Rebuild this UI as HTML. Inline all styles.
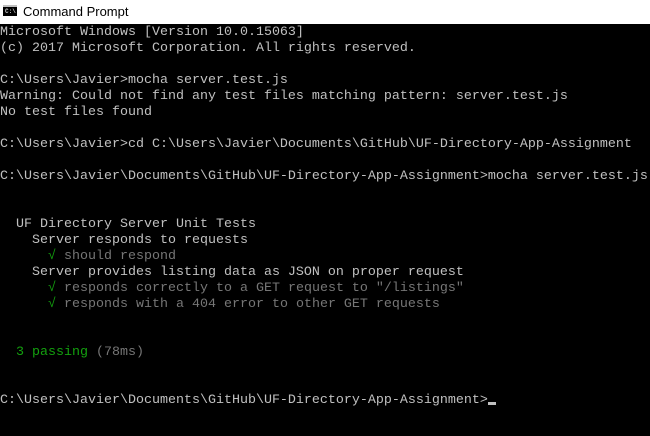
<!DOCTYPE html>
<html><head><meta charset="utf-8"><style>
html,body{margin:0;padding:0;width:650px;height:436px;overflow:hidden;background:#000}
#t{position:absolute;left:0;top:0;width:650px;height:24px;background:#fff}
#t span{position:absolute;left:23px;top:4px;font:13px "Liberation Sans",sans-serif;color:#000}
#ic{position:absolute;left:3px;top:5px;width:14px;height:11px;background:#000;border-top:2px solid #c0c0c0;box-sizing:border-box}
#ic i{position:absolute;left:2px;top:2px;font:bold 6px "Liberation Mono",monospace;color:#ccc;font-style:normal;line-height:6px}
pre{position:absolute;left:0;top:25px;margin:0;font:13.33px/16px "Liberation Mono",monospace;color:#c0c0c0;white-space:pre}
.g{color:#13a10e}.d{color:#767676}
.cur{display:inline-block;width:8px;height:3px;background:#c0c0c0;vertical-align:-2px}
</style></head><body>
<div id="t"><div id="ic"><i>C:\</i></div><span>Command Prompt</span></div>
<pre>Microsoft Windows [Version 10.0.15063]
(c) 2017 Microsoft Corporation. All rights reserved.

C:\Users\Javier&gt;mocha server.test.js
Warning: Could not find any test files matching pattern: server.test.js
No test files found

C:\Users\Javier&gt;cd C:\Users\Javier\Documents\GitHub\UF-Directory-App-Assignment

C:\Users\Javier\Documents\GitHub\UF-Directory-App-Assignment&gt;mocha server.test.js


  UF Directory Server Unit Tests
    Server responds to requests
      <span class="g">√</span> <span class="d">should respond</span>
    Server provides listing data as JSON on proper request
      <span class="g">√</span> <span class="d">responds correctly to a GET request to "/listings"</span>
      <span class="g">√</span> <span class="d">responds with a 404 error to other GET requests</span>


  <span class="g">3 passing</span> <span class="d">(78ms)</span>


C:\Users\Javier\Documents\GitHub\UF-Directory-App-Assignment&gt;<span class="cur"></span></pre>
</body></html>
